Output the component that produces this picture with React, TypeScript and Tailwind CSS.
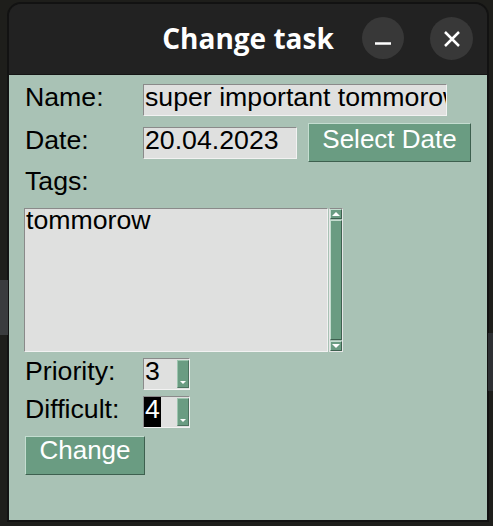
const sans = "font-['Liberation_Sans',Arial,sans-serif] text-[26.7px]";

function Entry({ value, className }: { value: string; className: string }) {
  return (
    <div
      className={`h-[32px] overflow-hidden whitespace-nowrap border border-t-[#8a8a8a] border-l-[#8a8a8a] border-b-[#f2f2f2] border-r-[#f2f2f2] bg-[#dfe0df] pl-[1px] leading-[24px] text-black ${className}`}
    >
      {value}
    </div>
  );
}

function Spinbox({ value, selected }: { value: string; selected?: boolean }) {
  return (
    <div className="flex h-[32px] w-[47px] border border-t-[#8a8a8a] border-l-[#8a8a8a] border-b-[#f2f2f2] border-r-[#f2f2f2] bg-[#dfe0df]">
      <div className="flex-1 leading-[24px]">
        {selected ? (
          <span className="inline-block h-[30px] bg-black pl-[1px] pr-[1px] text-white">{value}</span>
        ) : (
          <span className="pl-[1px]">{value}</span>
        )}
      </div>
      <div className="my-[1px] flex w-[12px] flex-col justify-end border border-t-[#9cc4ae] border-l-[#9cc4ae] border-b-[#4d7360] border-r-[#4d7360] bg-[#6a9c82] pb-[2px]">
        <svg width="10" height="4" viewBox="0 0 10 4" className="mx-auto">
          <path d="M2 0h6l-3 3z" fill="#ffffff" />
        </svg>
      </div>
    </div>
  );
}

function Button({ label, className }: { label: string; className: string }) {
  return (
    <div
      className={`h-[39px] whitespace-nowrap border border-t-[#c4ddd0] border-l-[#c4ddd0] border-b-[#3e604f] border-r-[#3e604f] bg-[#6a9c82] text-center text-white ${className}`}
    >
      {label}
    </div>
  );
}

export default function App() {
  return (
    <div className="relative h-[526px] w-[493px] overflow-hidden bg-[#1e1e1b]">
      <div className="absolute left-0 top-[280px] h-[55px] w-[8px] bg-[#3a3c3e]" />
      <div className="absolute right-0 top-[333px] h-[58px] w-[5px] bg-[#2e3033]" />
      <div className="pl-[7px] pt-[2px]">
        <div className="flex h-[520px] w-[482px] flex-col overflow-hidden rounded-t-[14px] border-2 border-[#121212]">
          <div className="relative flex h-[71px] shrink-0 justify-center border-b border-[#151515] bg-[#222222] pt-[16px]">
            <span className="font-['Open_Sans',sans-serif] text-[28px] font-bold leading-[36px] text-white">
              Change task
            </span>
            <div className="absolute right-[14px] top-[13px] flex gap-[26px]">
              <div className="flex h-[42px] w-[42px] items-center justify-center rounded-full bg-[#383838]">
                <svg width="18" height="18" viewBox="0 0 18 18">
                  <path d="M1 14.5h16" stroke="#ffffff" strokeWidth="2.5" />
                </svg>
              </div>
              <div className="flex h-[43px] w-[43px] items-center justify-center rounded-full bg-[#383838]">
                <svg width="18" height="18" viewBox="0 0 18 18">
                  <path d="M2 2l14 14M16 2L2 16" stroke="#ffffff" strokeWidth="2.5" />
                </svg>
              </div>
            </div>
          </div>
          <div className={`flex flex-1 flex-col bg-[#a9c2b5] pl-[16px] pt-[9px] text-black ${sans}`}>
            <div className="flex">
              <span className="w-[118px] leading-[26px]">Name:</span>
              <Entry value="super important tommorow" className="w-[304px]" />
            </div>
            <div className="mt-[7px] flex">
              <span className="mt-[4px] w-[118px] leading-[26px]">Date:</span>
              <Entry value="20.04.2023" className="mt-[4px] w-[154px]" />
              <Button label="Select Date" className="ml-[11px] w-[163px] text-[26px] leading-[30px]" />
            </div>
            <span className="mt-[6px] leading-[26px]">Tags:</span>
            <div className="-ml-[1px] mt-[14px] flex h-[144px]">
              <div className="w-[304px] border border-t-[#8a8a8a] border-l-[#8a8a8a] border-b-[#f2f2f2] border-r-[#f2f2f2] bg-[#dfe0df] pl-[1px] leading-[22px]">
                tommorow
              </div>
              <div className="ml-[1px] flex w-[14px] flex-col gap-[1px] border border-t-[#8a8a8a] border-l-[#e6e6e6] border-b-[#e6e6e6] border-r-[#e6e6e6] bg-[#a9c2b5]">
                <div className="flex h-[10px] items-center justify-center border border-t-[#c4ddd0] border-l-[#c4ddd0] border-b-[#3e604f] border-r-[#3e604f] bg-[#6a9c82]">
                  <svg width="8" height="4" viewBox="0 0 8 4">
                    <path d="M0 4h8L4 0z" fill="#ffffff" />
                  </svg>
                </div>
                <div className="flex-1 border border-t-[#c4ddd0] border-l-[#c4ddd0] border-b-[#3e604f] border-r-[#3e604f] bg-[#6a9c82]" />
                <div className="flex h-[10px] items-center justify-center border border-t-[#c4ddd0] border-l-[#c4ddd0] border-b-[#3e604f] border-r-[#3e604f] bg-[#6a9c82]">
                  <svg width="8" height="4" viewBox="0 0 8 4">
                    <path d="M0 0h8L4 4z" fill="#ffffff" />
                  </svg>
                </div>
              </div>
            </div>
            <div className="mt-[6px] flex">
              <span className="w-[118px] leading-[26px]">Priority:</span>
              <Spinbox value="3" />
            </div>
            <div className="mt-[6px] flex">
              <span className="w-[118px] leading-[26px]">Difficult:</span>
              <Spinbox value="4" selected />
            </div>
            <Button label="Change" className="mt-[8px] w-[120px] text-[26px] leading-[26px]" />
          </div>
        </div>
      </div>
    </div>
  );
}
